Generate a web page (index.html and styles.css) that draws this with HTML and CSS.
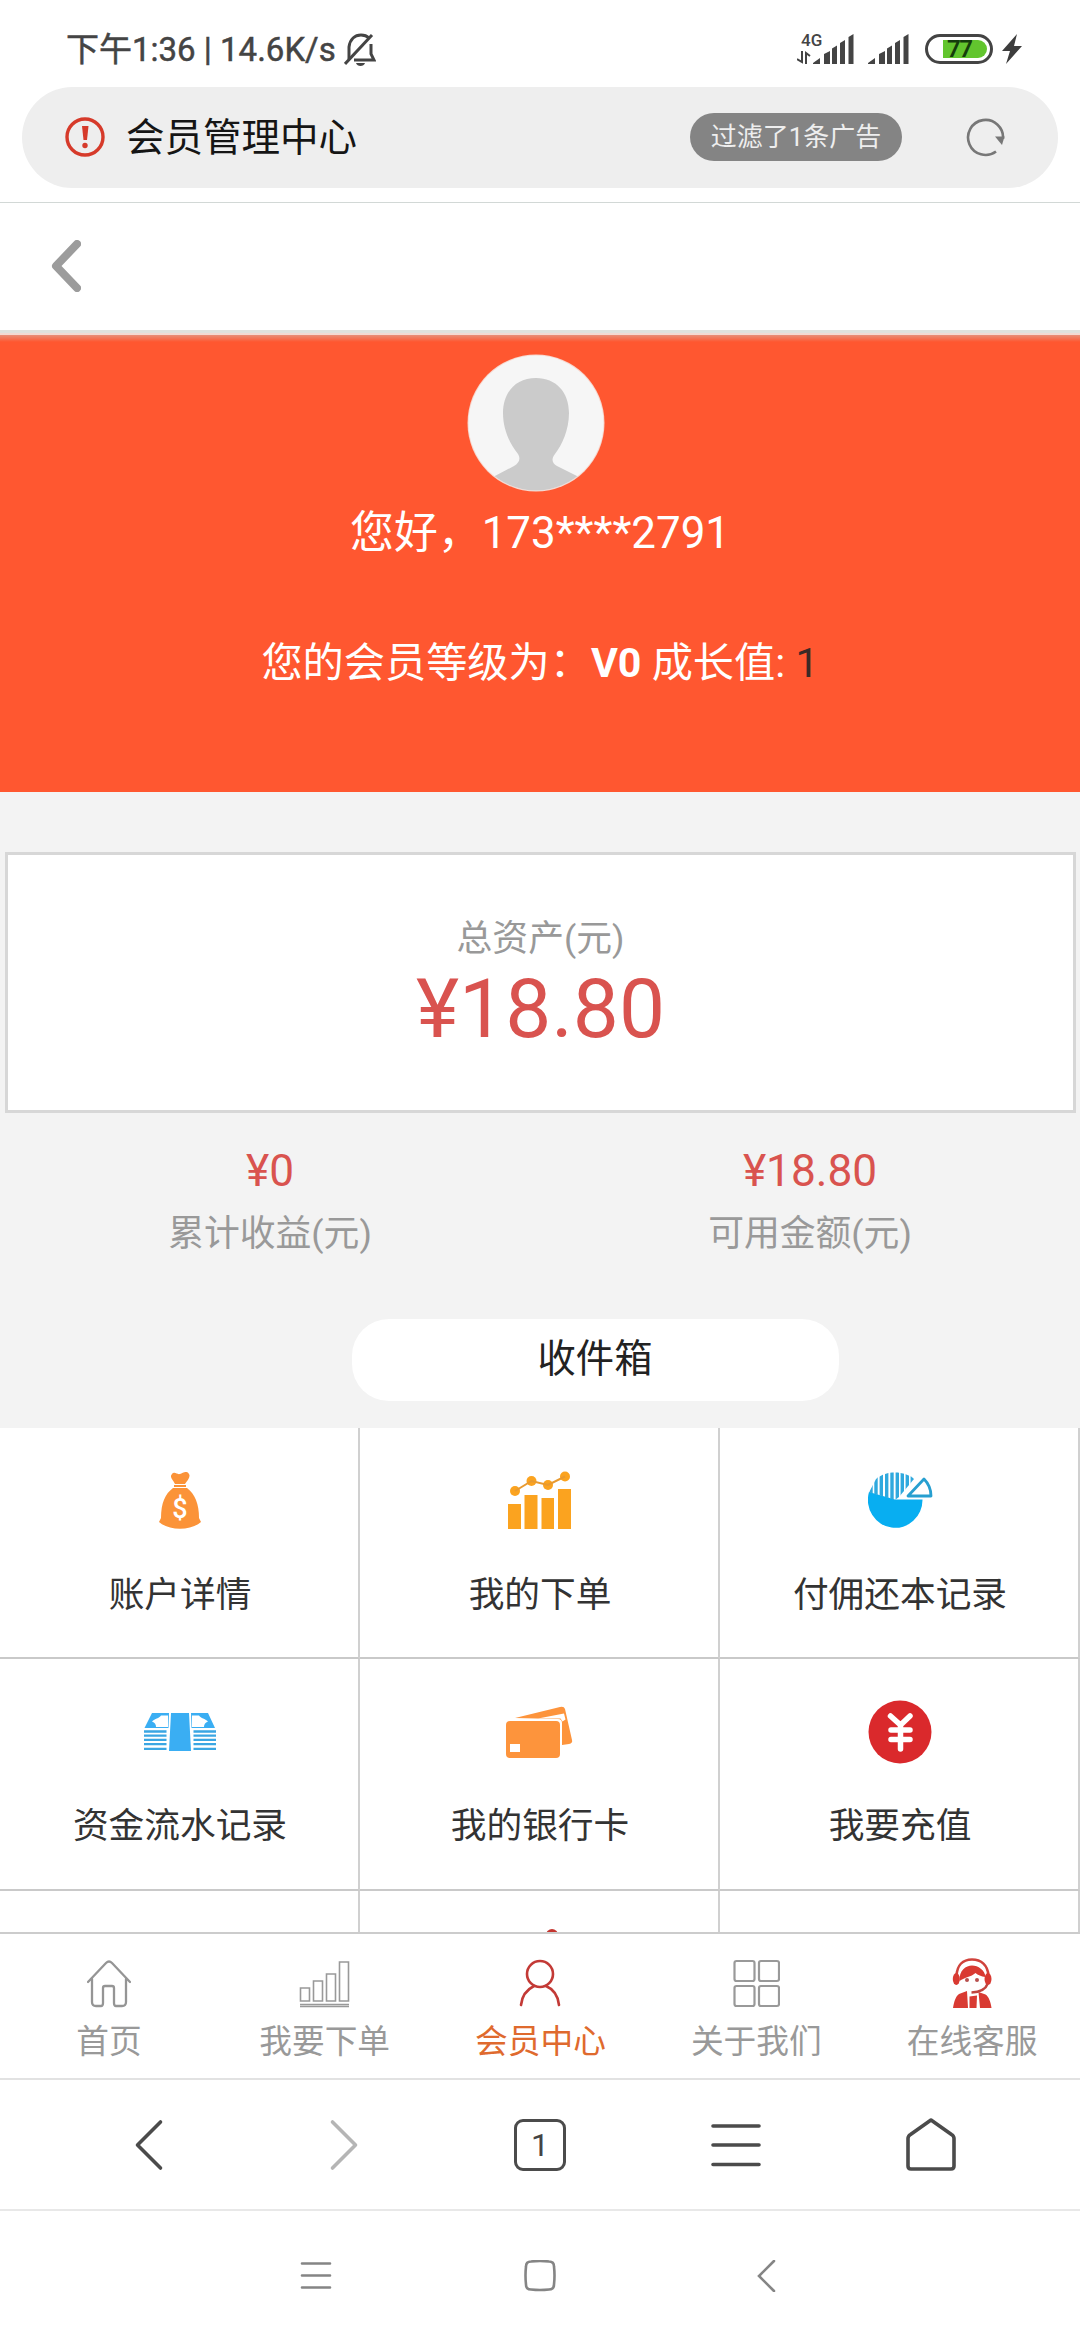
FILE: index.html
```html
<!DOCTYPE html>
<html lang="zh-CN">
<head>
<meta charset="utf-8">
<title>会员管理中心</title>
<link rel="stylesheet" href="styles.css">
</head>
<body>
<div class="phone">
  <header class="status">
    <div class="status-left">
      <span class="status-text">下午1:36 | 14.6K/s</span>
      <svg class="bell" width="32" height="34" viewBox="0 0 32 34" fill="none" stroke="#444" stroke-width="3"><path d="M5 26V14C6 6 11 2 17 2c4 0 6 1 8 3"/><path d="M1 31 28 2"/><path d="M27 11v10l3 6H10"/><path d="M12 30h9c-1 4-8 4-9 0z" fill="#444" stroke="none"/></svg>
    </div>
    <div class="status-right">
      <div class="net"><span class="net-type">4G</span><svg width="14" height="13" viewBox="0 0 14 13" fill="none" stroke="#444" stroke-width="2"><path d="M5 0v11L0 8M9 13V2l4 3"/></svg></div>
      <svg class="bars" width="41" height="31" viewBox="0 0 41 31" fill="#444"><path d="M0 30v-1l7-5v6zM11 30V20l6-3v13zM19 30V14.500l5-3V30zM27 30V9l5-3v24zM35.500 30V3l5-3v30z"/></svg>
      <svg class="bars" width="41" height="31" viewBox="0 0 41 31" fill="#444"><path d="M0 30v-1l7-5v6zM11 30V20l6-3v13zM19 30V14.500l5-3V30zM27 30V9l5-3v24zM35.500 30V3l5-3v30z"/></svg>
      <div class="battery"><span class="charge">77</span></div>
      <svg width="20" height="30" viewBox="0 0 20 30" fill="#3d3d3d"><path d="M15 0 0 17h8L4 30 20 12h-8z"/></svg>
    </div>
  </header>

  <div class="address">
    <svg width="40" height="40" viewBox="0 0 40 40"><circle cx="20" cy="20" r="18" fill="none" stroke="#d63a2a" stroke-width="3.400"/><path d="M17 9h6.500l-1.500 14h-3.500z" fill="#d63a2a"/><circle cx="20" cy="28.500" r="2.700" fill="#d63a2a"/></svg>
    <span class="address-title">会员管理中心</span>
    <span class="badge">过滤了1条广告</span>
    <svg class="reload" width="40" height="40" viewBox="0 0 40 40"><path d="M37 22A17.500 17.500 0 1 0 30 34.500" fill="none" stroke="#777" stroke-width="2.600"/><path d="M29 19.500h9.500L36 28z" fill="#777"/></svg>
  </div>

  <nav class="page-nav">
    <svg width="30" height="52" viewBox="0 0 30 52" fill="none" stroke="#9c9c9c" stroke-width="8" stroke-linecap="round" stroke-linejoin="round"><path d="M26 4 5 26l21 22"/></svg>
  </nav>

  <section class="hero">
    <svg class="avatar" width="138" height="138" viewBox="0 0 138 138"><defs><clipPath id="face"><circle cx="69" cy="69" r="67.500"/></clipPath></defs><circle cx="69" cy="69" r="68.500" fill="#f7d8cf"/><g clip-path="url(#face)"><path fill="#f6f6f6" d="M0 0h138v138H0z"/><path fill="#cbcbcb" d="M69 24c20 0 33 14 33 35 0 17-7 32-14 41-4 5-3 9 2 12l22 11 8 15H18l8-15 21-11c5-3 7-7 4-12-8-10-15-24-15-41 0-21 13-35 33-35z"/></g></svg>
    <p class="greeting">您好，173****2791</p>
    <p class="level">您的会员等级为：<b>V0</b> 成长值: <span class="growth">1</span></p>
  </section>

  <section class="total">
    <span class="caption">总资产(元)</span>
    <span class="total-value">¥18.80</span>
  </section>
  <section class="sums">
    <div class="sum"><span class="sum-value">¥0</span><span class="caption">累计收益(元)</span></div>
    <div class="sum"><span class="sum-value">¥18.80</span><span class="caption">可用金额(元)</span></div>
  </section>
  <div class="inbox-row"><a class="inbox">收件箱</a></div>

  <section class="menu">
    <a class="cell"><span class="pic"><svg width="42" height="57" viewBox="0 0 42 57"><path fill="#fb9338" d="M13 2c3-3 5 1 8 0s7-4 9 0c2 3-2 7-4 10H16C14 8 10 5 13 2zM15 13h12v2H15zM14 16h14c8 6 12 16 12 30l2 4c-10 9-32 9-42 0l2-4C2 31 6 22 14 16z"/><text x="21" y="46" class="dollar">$</text></svg></span><span>账户详情</span></a>
    <a class="cell"><span class="pic"><svg width="66" height="60" viewBox="0 0 66 60"><g fill="#fba31f"><path d="M1 33h13v25H1zM17.500 24h13v34h-13zM34.500 27h12.500v31H34.500zM51 18h13v40H51z"/><circle cx="8" cy="20" r="5"/><circle cx="24.500" cy="10" r="5"/><circle cx="41" cy="14" r="5"/><circle cx="58" cy="5.500" r="5"/></g><path d="m8 20 16.500-10L41 14l17-8.500" fill="none" stroke="#e89a30" stroke-width="2"/></svg></span><span>我的下单</span></a>
    <a class="cell"><span class="pic"><svg width="65" height="57" viewBox="0 0 65 57"><defs><clipPath id="hatch"><path d="M1 20.500 8 7C14 2 20 .500 27 .500S42 3 46 7L31 25l-4 3z"/></clipPath></defs><path fill="#08aef1" d="M1 20l26 7.500h27.500A27.300 28 0 1 1 1 20z"/><path clip-path="url(#hatch)" stroke="#2fa9de" stroke-width="3.400" d="M3 24V10M8 25V5M13.300 26V2M18.700 27V0M24 28V0M29.300 28V0M34.300 28V0M39.300 28V0M44.300 20V4"/><path fill="#fff" stroke="#279fd0" stroke-width="2.800" stroke-linejoin="round" d="M40 24 56 7c4 4 7 10 7 17z"/></svg></span><span>付佣还本记录</span></a>
    <a class="cell"><span class="pic"><svg width="72" height="38" viewBox="0 0 72 38"><path fill="#3aaef3" d="M27 0h18l2 38H25zM8 0h17l-.500 15H.500zM47 0h17l7 15H47.500z"/><path fill="#fff" d="M24 2.500h-7c-2 3-6 3-9 6 3 1 4 3 4 5.500h12zM48 2.500h7c2 3 6 3 9 6-3 1-4 3-4 5.500H48z"/><path stroke="#3aa6e3" stroke-width="2.300" d="M0 18.500h22.500M0 22.700h22.500M0 26.900h22.500M0 31.100h22.500M0 35.800h22.500M49.500 18.500H72M49.500 22.700H72M49.500 26.900H72M49.500 31.100H72M49.500 35.800H72"/></svg></span><span>资金流水记录</span></a>
    <a class="cell"><span class="pic"><svg width="68" height="52" viewBox="0 0 68 52"><g fill="#fd943c"><path d="M9 12 54 1q4-1 5 2l7 31q1 3-3 4l-7 1V17q0-4-4-4z"/><path fill="#fff" d="m32 12.500 26-5 1.500 6-3 2-2-3z"/><rect y="15" width="54" height="37" rx="4"/></g><path fill="#fff" d="M4 38h10v8H4z"/></svg></span><span>我的银行卡</span></a>
    <a class="cell"><span class="pic"><svg width="64" height="64" viewBox="0 0 64 64"><circle cx="32" cy="32" r="31.500" fill="#da292c"/><path d="m22.500 16 10 9 9.500-9M23 30h19M23 39.500h19M32.500 25v24" fill="none" stroke="#fff" stroke-width="5.500" stroke-linecap="round"/></svg></span><span>我要充值</span></a>
    <a class="cell cut"></a>
    <a class="cell cut peek"><svg width="12" height="12" viewBox="0 0 12 12"><circle cx="6" cy="6" r="6" fill="#c4352f"/></svg></a>
    <a class="cell cut"></a>
  </section>

  <nav class="tabs">
    <a class="tab"><svg width="44" height="50" viewBox="0 0 44 50" fill="none" stroke="#959595" stroke-width="2.300" stroke-linecap="round"><path d="m1 24 18-19q3-3 6 0l18 19M5 21v23q0 4 4 4h5q2 0 2-3V30q0-2 2-2h7q2 0 2 2v15q0 3 2 3h6q4 0 4-4V21"/></svg><span>首页</span></a>
    <a class="tab"><svg width="52" height="50" viewBox="0 0 52 50" fill="none" stroke="#999" stroke-width="1.600"><path d="M1.500 30h9v13h-9zM14.500 23h9v20h-9zM27.500 16h9v27h-9zM40.500 4h9v39h-9zM1 46.500h49M1 48.500h49"/></svg><span>我要下单</span></a>
    <a class="tab active"><svg width="44" height="50" viewBox="0 0 44 50" fill="none" stroke="#c33a36" stroke-width="2.600" stroke-linecap="round"><circle cx="22" cy="16" r="13"/><path d="M3 47c1-10 7-16 13-19M28 28c7 3 12 9 13 19"/></svg><span>会员中心</span></a>
    <a class="tab"><svg width="48" height="50" viewBox="0 0 48 50" fill="none" stroke="#999" stroke-width="2.200"><rect x="2.500" y="3" width="20" height="20" rx="2"/><rect x="27" y="3" width="20" height="20" rx="2"/><rect x="2.500" y="28" width="20" height="20" rx="2"/><rect x="27" y="28" width="20" height="20" rx="2"/></svg><span>关于我们</span></a>
    <a class="tab"><svg width="42" height="52" viewBox="0 0 42 52"><path d="M5.500 19C6 8 12 2.500 21 2.500S37 8 37.500 19" fill="none" stroke="#d0433c" stroke-width="2.600"/><ellipse cx="5.300" cy="22" rx="3.500" ry="6" fill="#d93a32"/><ellipse cx="37" cy="22" rx="3.500" ry="6" fill="#d93a32"/><path fill="#d93a32" d="M8.500 24C8 13 15 8.500 21 8.500S34 13 34.500 20C30 19.500 27 18 24.500 16 20 20 14 20 8.500 24zM2 51c1-7 3-12 6-14l8-3 1 17zM18.500 39.500l7.500-1-.500 12.500h-7zM27.500 35l7 2.500c3 2 5 6.500 6 13.500H29z"/><circle cx="16" cy="23" r="2" fill="#b8504e"/><circle cx="26" cy="23" r="2" fill="#b8504e"/><path d="M36.500 27c-2 6-8 8-16 8.500" fill="none" stroke="#c0453f" stroke-width="2.400"/></svg><span>在线客服</span></a>
  </nav>

  <nav class="browser">
    <svg width="50" height="54" viewBox="0 0 50 54"><path d="M36.500 4 13.500 27l23 23"/></svg>
    <svg class="faded" width="50" height="54" viewBox="0 0 50 54"><path d="m13.500 4 23 23-23 23"/></svg>
    <span class="tab-count">1</span>
    <svg width="50" height="54" viewBox="0 0 50 54"><path d="M2 8h46M2 27h46M2 46.500h46"/></svg>
    <svg width="50" height="54" viewBox="0 0 50 54"><path d="M25 2 4.500 16.500Q2 18 2 20.500V48q0 3 3 3h40q3 0 3-3V20.500q0-2.500-2.500-4z"/></svg>
  </nav>

  <nav class="system">
    <svg width="32" height="32" viewBox="0 0 32 32"><path d="M2 3.500h28M2 15.500h28M2 27.500h28"/></svg>
    <svg width="32" height="32" viewBox="0 0 32 32"><path d="M7 1.500q9-1 18 0 5 0 5 5 1 9 0 18 0 5-5 5-9 1-18 0-5 0-5-5-1-9 0-18 0-5 5-5z"/></svg>
    <svg width="32" height="32" viewBox="0 0 32 32"><path d="M26 1 11 16l15 15"/></svg>
  </nav>
</div>
</body>
</html>
```

FILE: styles.css
```css
* { box-sizing: border-box; }
body { margin: 0; background: #fff; font-family: Roboto, "Noto Sans CJK SC", sans-serif; color: #333; }
p { margin: 0; }
svg { display: block; flex: none; }
.phone { width: 1080px; height: 2340px; background: linear-gradient(#fff 0 203px, #f3f3f3 203px); display: flex; flex-direction: column; overflow: hidden; white-space: nowrap; }
.phone > * { flex: none; }

.status { height: 87px; background: #fff; display: flex; justify-content: space-between; padding: 0 58px 0 66px; }
.status-left { display: flex; align-items: flex-start; gap: 8px; }
.status-text { font-size: 33px; line-height: 40px; margin-top: 30px; color: #444; -webkit-text-stroke: 0.5px #444; }
.bell { margin-top: 33px; }
.status-right { display: flex; align-items: flex-start; padding-top: 34px; }
.net { display: flex; flex-direction: column; width: 16px; }
.net-type { font-size: 17px; line-height: 12px; height: 17px; font-weight: 500; color: #444; margin-left: 4px; }
.bars + .bars { margin-left: 14px; }
.battery { width: 68px; height: 30px; border: 3.500px solid #444; border-radius: 16px; margin: 0 9px 0 16px; padding: 3px 3px 3px 15px; }
.charge { display: block; height: 18px; background: #62c52e; border-radius: 0 10px 10px 0; font-size: 24px; line-height: 18px; font-weight: 600; color: #143d0c; padding-left: 4px; letter-spacing: -1.500px; }

.address { height: 101px; width: 1036px; align-self: center; display: flex; align-items: center; background: #eee; border-radius: 51px; padding: 0 52px 2px 43px; }
.address-title { font-size: 38.500px; line-height: 50px; color: #151515; margin: 3px 0 0 21px; }
.badge { margin-left: auto; width: 212px; height: 48px; border-radius: 24px; background: #848484; color: #eee; font-size: 26px; line-height: 49px; text-align: center; }
.reload { margin-left: 64px; }

.page-nav { height: 128px; margin-top: 14px; border-top: 1px solid #d2d8d6; background: #fff; padding: 37px 0 0 51px; }
.hero { height: 462px; background: linear-gradient(#dfe2dd 0 3px, #f3dad2 3px 5px, #e78f78 5px, #ff5730 12px); display: flex; flex-direction: column; align-items: center; color: #fff; }
.avatar { margin: 24px 9px 0 0; }
.greeting { font-size: 43.900px; line-height: 60px; margin-top: 11px; }
.level { font-size: 41.200px; line-height: 60px; margin-top: 70px; }
.growth { color: #3a2a26; }

.total { margin: 60px 4px 0 5px; height: 261px; background: #fff; border: 3px solid #d7d7d7; display: flex; flex-direction: column; align-items: center; padding-top: 59px; }
.caption { font-size: 35.800px; line-height: 50px; color: #999; }
.total-value { font-size: 82px; line-height: 90px; color: #d9534f; }
.sums { display: grid; grid-template-columns: 1fr 1fr; height: 206px; padding-top: 31px; }
.sum { display: flex; flex-direction: column; align-items: center; }
.sum-value { font-size: 44.200px; line-height: 54px; color: #d9534f; margin-bottom: 11px; }
.inbox-row { height: 109px; display: flex; justify-content: center; padding-left: 110px; }
.inbox { width: 487px; height: 82px; border-radius: 37px; background: #fff; font-size: 38.300px; line-height: 79px; text-align: center; color: #222; }

.menu { height: 504px; display: grid; grid-template-columns: 360px 360px 360px; grid-template-rows: 231px 232px 41px; background: #fff; overflow: hidden; }
.cell { border-right: 2px solid #d0d0d0; border-bottom: 2px solid #c9c9c9; padding-left: 2px; display: flex; flex-direction: column; align-items: center; font-size: 35.700px; line-height: 50px; }
.pic { height: 142px; padding-top: 3px; display: flex; align-items: center; }
.cut { border-bottom: 0; overflow: hidden; }
.peek { padding: 38px 0 0 26px; }
.dollar { font: 500 27px Roboto, sans-serif; fill: #fff; text-anchor: middle; }

.tabs { height: 148px; border-top: 2px solid #ccc; border-bottom: 2px solid #e2e2e2; background: #fff; display: grid; grid-template-columns: repeat(5, 1fr); padding-left: 1px; }
.tab { display: flex; flex-direction: column; align-items: center; padding-top: 23px; font-size: 32.700px; line-height: 50px; color: #999; }
.tab svg { height: 52px; margin-bottom: 8px; }
.tab.active { color: #df6a2e; }

.browser { height: 131px; padding: 0 51px; background: #fff; border-bottom: 2px solid #e8e8e8; display: grid; grid-template-columns: repeat(5, 1fr); align-items: center; justify-items: center; }
.browser svg { fill: none; stroke: #4b4b4b; stroke-width: 3.600px; stroke-linecap: round; stroke-linejoin: round; }
.browser .faded { stroke: #b5b5b5; }
.tab-count { width: 52px; height: 52px; border: 3.500px solid #4b4b4b; border-radius: 9px; font-size: 32px; line-height: 46px; text-align: center; color: #444; }
.system { height: 129px; background: #fff; display: flex; justify-content: center; align-items: center; gap: 192px; }
.system svg { fill: none; stroke: #858585; stroke-width: 2.600px; stroke-linecap: round; }
```
